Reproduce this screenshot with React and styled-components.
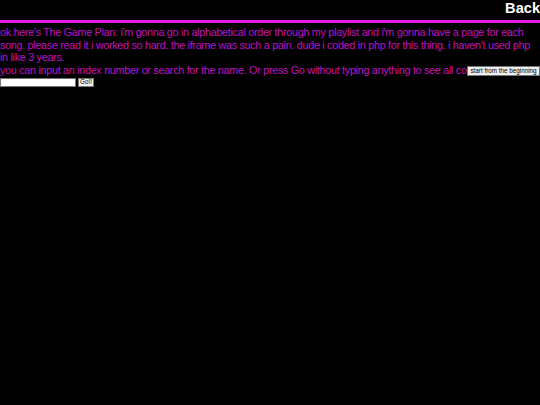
import React from "react";
import styled, { createGlobalStyle } from "styled-components";

const Global = createGlobalStyle`
  html, body { margin: 0; padding: 0; background: #000; }
  body { font-family: "Liberation Sans", Arial, sans-serif; }
`;

const Page = styled.div`
  position: relative;
  width: 540px;
  min-height: 405px;
  background: #000;
`;

const Header = styled.header`
  display: flex;
  justify-content: flex-end;
  align-items: flex-start;
  height: 20px;
  border-bottom: 3px solid #e01ee0;
`;

const BackLink = styled.a`
  color: #fff;
  font-weight: bold;
  font-size: 14.6px;
  line-height: 16px;
  text-decoration: none;
  cursor: pointer;
`;

const Content = styled.main`
  padding-top: 3px;
  color: #c010c0;
  font-size: 10.8px;
  letter-spacing: -0.3px;
  line-height: 12.7px;
`;

const Para = styled.p`
  margin: 0;
  white-space: ${(p) => (p.$nowrap ? "nowrap" : "normal")};
  overflow: hidden;
`;

const Form = styled.form`
  display: flex;
  align-items: center;
  gap: 2px;
  margin-top: 1px;
`;

const SearchInput = styled.input`
  box-sizing: border-box;
  width: 76px;
  height: 9px;
  padding: 0;
  margin: 0;
  border: 1px solid #767676;
  background: #fff;
  font-size: 6px;
`;

const SmallButton = styled.button`
  box-sizing: border-box;
  height: 9px;
  padding: 0 1px;
  margin: 0;
  border: 1px solid #767676;
  background: #efefef;
  color: #000;
  font-family: "Liberation Sans", Arial, sans-serif;
  font-size: 6.3px;
  line-height: 6px;
`;

const StartButton = styled(SmallButton)`
  position: absolute;
  right: 0;
  top: 66px;
  height: 10px;
  width: 73px;
  white-space: nowrap;
  padding: 0;
`;

export default function App() {
  return (
    <>
      <Global />
      <Page>
        <Header>
          <BackLink>Back</BackLink>
        </Header>
        <Content>
          <Para>
            ok here's The Game Plan: i'm gonna go in alphabetical order through my playlist and i'm gonna have a page for each song. please read it i worked so hard. the iframe was such a pain. dude i coded in php for this thing. i haven't used php in like 3 years.
          </Para>
          <Para $nowrap>
            you can input an index number or search for the name. Or press Go without typing anything to see all complete songs
          </Para>
          <Form onSubmit={(e) => e.preventDefault()}>
            <SearchInput type="text" />
            <SmallButton type="submit">Go!!</SmallButton>
          </Form>
        </Content>
        <StartButton type="button">start from the beginning</StartButton>
      </Page>
    </>
  );
}
